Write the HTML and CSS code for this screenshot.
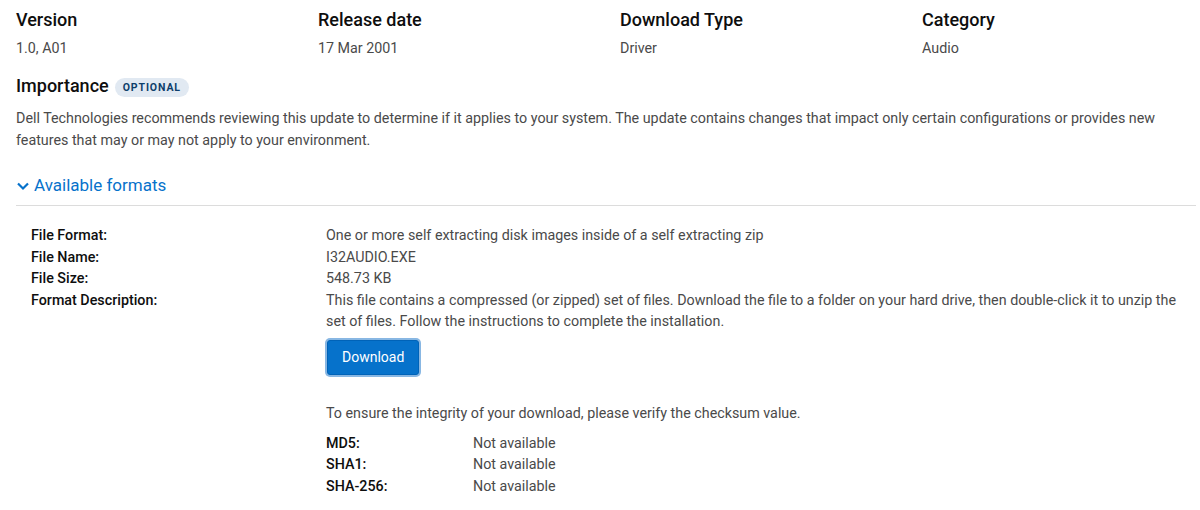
FILE: index.html
```html
<!DOCTYPE html>
<html>
<head>
<meta charset="utf-8">
<link rel="stylesheet" href="styles.css">
</head>
<body>
<div class="page">
  <div class="meta">
    <div class="meta-item"><h3 class="meta-title">Version</h3><div class="meta-value">1.0, A01</div></div>
    <div class="meta-item"><h3 class="meta-title">Release date</h3><div class="meta-value">17 Mar 2001</div></div>
    <div class="meta-item"><h3 class="meta-title">Download Type</h3><div class="meta-value">Driver</div></div>
    <div class="meta-item"><h3 class="meta-title">Category</h3><div class="meta-value">Audio</div></div>
  </div>
  <div class="importance">
    <h3 class="meta-title">Importance</h3>
    <span class="badge">OPTIONAL</span>
  </div>
  <p class="desc">Dell Technologies recommends reviewing this update to determine if it applies to your system. The update contains changes that impact only certain configurations or provides new features that may or may not apply to your environment.</p>
  <div class="formats-toggle">
    <svg class="chev" width="14" height="14" viewBox="0 0 14 14"><path d="M2 4.5 L7 9.5 L12 4.5" fill="none" stroke="#0672cb" stroke-width="2.2"/></svg>
    <span>Available formats</span>
  </div>
  <div class="formats">
    <div class="frow"><div class="flabel">File Format:</div><div class="fvalue">One or more self extracting disk images inside of a self extracting zip</div></div>
    <div class="frow"><div class="flabel">File Name:</div><div class="fvalue">I32AUDIO.EXE</div></div>
    <div class="frow"><div class="flabel">File Size:</div><div class="fvalue">548.73 KB</div></div>
    <div class="frow"><div class="flabel">Format Description:</div><div class="fvalue">This file contains a compressed (or zipped) set of files. Download the file to a folder on your hard drive, then double-click it to unzip the set of files. Follow the instructions to complete the installation.
      <div class="btn-wrap"><button class="btn">Download</button></div>
      <p class="integrity">To ensure the integrity of your download, please verify the checksum value.</p>
      <div class="hashes">
        <div class="hlabel">MD5:</div><div class="hvalue">Not available</div>
        <div class="hlabel">SHA1:</div><div class="hvalue">Not available</div>
        <div class="hlabel">SHA-256:</div><div class="hvalue">Not available</div>
      </div>
    </div></div>
  </div>
</div>
</body>
</html>
```
FILE: styles.css
```css
* { box-sizing: border-box; }
html, body { margin: 0; padding: 0; background: #fff; }
body { font-family: Roboto, "Liberation Sans", Arial, sans-serif; color: #4a4a4a; font-size: 14.3px; }
.page { padding: 8px 4px 0 16px; width: 1200px; }
.meta { display: grid; grid-template-columns: repeat(4, 274px); column-gap: 28px; }
.meta-title { margin: 0; font-size: 18px; font-weight: 500; color: #0e0e0e; line-height: 24px; }
.meta-value { margin-top: 5px; line-height: 22px; }
.importance { display: flex; align-items: center; gap: 6px; margin-top: 15px; }
.badge { background: #e1e9f2; color: #0e3e6b; font-size: 10.5px; font-weight: 700; letter-spacing: 0.9px; padding: 3px 8px 2px; border-radius: 10px; line-height: 14px; margin-top: 2px; }
.desc { margin: 9px 0 0; line-height: 22px; width: 1165px; }
.formats-toggle { display: flex; align-items: center; gap: 4px; margin-top: 22px; color: #0672cb; font-size: 17px; line-height: 24px; padding-bottom: 8px; border-bottom: 1px solid #dcdcdc; width: 1180px; }
.chev { margin-top: 2px; }
.formats { padding: 19px 0 0 15px; }
.frow { display: flex; line-height: 21.5px; }
.flabel { width: 295px; flex: none; font-weight: 500; color: #0e0e0e; }
.fvalue { width: 858px; }
.btn-wrap { margin-top: 7px; }
.btn { font-family: inherit; font-size: 14px; color: #fff; background: #0672cb; border: 1px solid #0063b8; border-radius: 3px; padding: 0 14px; height: 35px; box-shadow: 0 0 0 2px #88b7e3; margin-left: 1px; }
.integrity { margin: 27px 0 0; line-height: 22px; }
.hashes { display: grid; grid-template-columns: 147px auto; margin-top: 9px; line-height: 21.5px; }
.hlabel { font-weight: 500; color: #0e0e0e; }
```
